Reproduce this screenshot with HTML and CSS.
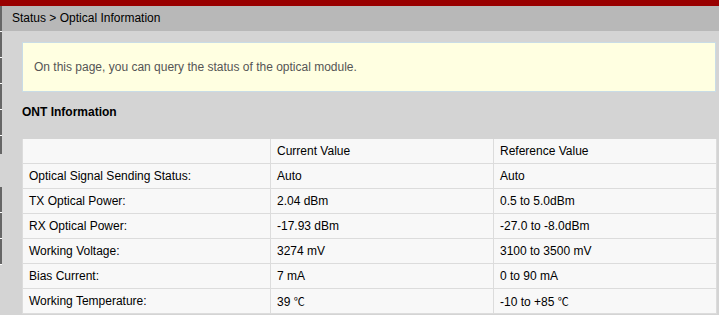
FILE: index.html
```html
<!DOCTYPE html>
<html>
<head>
<meta charset="utf-8">
<link rel="stylesheet" href="styles.css">
</head>
<body>
<div class="topbar"></div>
<div class="frame">
  <div class="strip">
    <div class="blk h25"></div>
    <div class="blk h25"></div>
    <div class="blk h25"></div>
    <div class="blk h25"></div>
    <div class="blk h25"></div>
    <div class="blk h18"></div>
    <div class="gap"></div>
    <div class="blk h25"></div>
    <div class="blk h25"></div>
    <div class="blk h25"></div>
  </div>
  <div class="main">
    <div class="crumb">Status &gt; Optical Information</div>
    <div class="content">
      <div class="notice">On this page, you can query the status of the optical module.</div>
      <div class="heading">ONT Information</div>
      <table class="info">
        <colgroup>
          <col class="c1"><col class="c2"><col class="c3">
        </colgroup>
        <tr><td></td><td>Current Value</td><td>Reference Value</td></tr>
        <tr><td>Optical Signal Sending Status:</td><td>Auto</td><td>Auto</td></tr>
        <tr><td>TX Optical Power:</td><td>2.04 dBm</td><td>0.5 to 5.0dBm</td></tr>
        <tr><td>RX Optical Power:</td><td>-17.93 dBm</td><td>-27.0 to -8.0dBm</td></tr>
        <tr><td>Working Voltage:</td><td>3274 mV</td><td>3100 to 3500 mV</td></tr>
        <tr><td>Bias Current:</td><td>7 mA</td><td>0 to 90 mA</td></tr>
        <tr><td>Working Temperature:</td><td>39 <span class="deg">℃</span></td><td>-10 to +85 <span class="deg">℃</span></td></tr>
      </table>
    </div>
  </div>
</div>
</body>
</html>
```

FILE: styles.css
```css
html, body {
  margin: 0;
  padding: 0;
  background: #d4d4d4;
  font-family: "Liberation Sans", Arial, sans-serif;
  font-size: 12px;
  color: #000;
  height: 315px;
  overflow: hidden;
}
.topbar {
  height: 6px;
  background: #990000;
}
.frame {
  display: flex;
}
.strip {
  width: 2px;
  display: flex;
  flex-direction: column;
  flex: none;
}
.blk {
  background: #666;
  border-bottom: 1px solid #fff;
}
.h25 { height: 25px; }
.h18 { height: 18px; border-bottom: none; }
.gap { height: 33px; }
.main {
  flex: 1;
  min-width: 0;
}
.crumb {
  height: 25px;
  line-height: 25px;
  background: #b8b8b8;
  padding-left: 10px;
  color: #000;
}
.content {
  padding: 11px 3px 0 20px;
}
.notice {
  height: 48px;
  line-height: 48px;
  background: #ffffe1;
  border: 1px solid #c9dce6;
  padding-left: 11px;
  color: #555;
}
.heading {
  font-weight: bold;
  line-height: 16px;
  padding-top: 12px;
  margin-bottom: 19px;
}
.info {
  width: 100%;
  border-collapse: collapse;
  table-layout: fixed;
  background: #f8f8f8;
}
.c1 { width: 248px; }
.c2 { width: 223px; }
.c3 { width: 223px; }
.info td {
  height: 24px;
  padding: 0 0 0 6px;
  border: 1px solid #dcdcdc;
  border-top: none;
  vertical-align: middle;
  white-space: nowrap;
}
.deg {
  font-family: "Noto Sans CJK SC", sans-serif;
  font-size: 11px;
}
```
